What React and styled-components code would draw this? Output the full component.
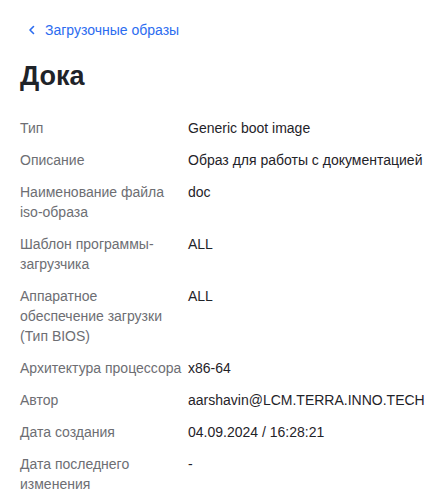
import { Fragment } from 'react';
import styled, { createGlobalStyle } from 'styled-components';

const GlobalStyle = createGlobalStyle`
  body {
    margin: 0;
    background: #ffffff;
    font-family: "Liberation Sans", Arial, sans-serif;
  }
`;

const Page = styled.div`
  padding: 20px;
`;

const BackLink = styled.a`
  display: inline-flex;
  align-items: center;
  gap: 9px;
  padding-left: 8px;
  height: 20px;
  font-size: 14px;
  line-height: 20px;
  color: #2b6cf0;
  text-decoration: none;
  cursor: pointer;
`;

const Title = styled.h1`
  margin: 18px 0 24px;
  font-size: 27px;
  line-height: 36px;
  font-weight: 700;
  color: #1f2329;
`;

const Details = styled.dl`
  margin: 0;
  display: grid;
  grid-template-columns: 162px 1fr;
  column-gap: 6px;
  row-gap: 12px;
  font-size: 14px;
  line-height: 20px;
`;

const Label = styled.dt`
  color: #6d6e73;
`;

const Value = styled.dd`
  margin: 0;
  color: #1f2329;
`;

const rows = [
  ['Тип', 'Generic boot image'],
  ['Описание', 'Образ для работы с документацией'],
  ['Наименование файла iso-образа', 'doc'],
  ['Шаблон программы-загрузчика', 'ALL'],
  ['Аппаратное обеспечение загрузки (Тип BIOS)', 'ALL'],
  ['Архитектура процессора', 'x86-64'],
  ['Автор', 'aarshavin@LCM.TERRA.INNO.TECH'],
  ['Дата создания', '04.09.2024 / 16:28:21'],
  ['Дата последнего изменения', '-'],
];

function ChevronLeft() {
  return (
    <svg width="8" height="10" viewBox="0 0 8 10" fill="none">
      <path d="M5.5 1.5L2 5l3.5 3.5" stroke="currentColor" strokeWidth="1.6" strokeLinecap="round" strokeLinejoin="round" />
    </svg>
  );
}

export default function App() {
  return (
    <>
      <GlobalStyle />
      <Page>
        <BackLink>
          <ChevronLeft />
          Загрузочные образы
        </BackLink>
        <Title>Дока</Title>
        <Details>
          {rows.map(([label, value]) => (
            <Fragment key={label}>
              <Label>{label}</Label>
              <Value>{value}</Value>
            </Fragment>
          ))}
        </Details>
      </Page>
    </>
  );
}
